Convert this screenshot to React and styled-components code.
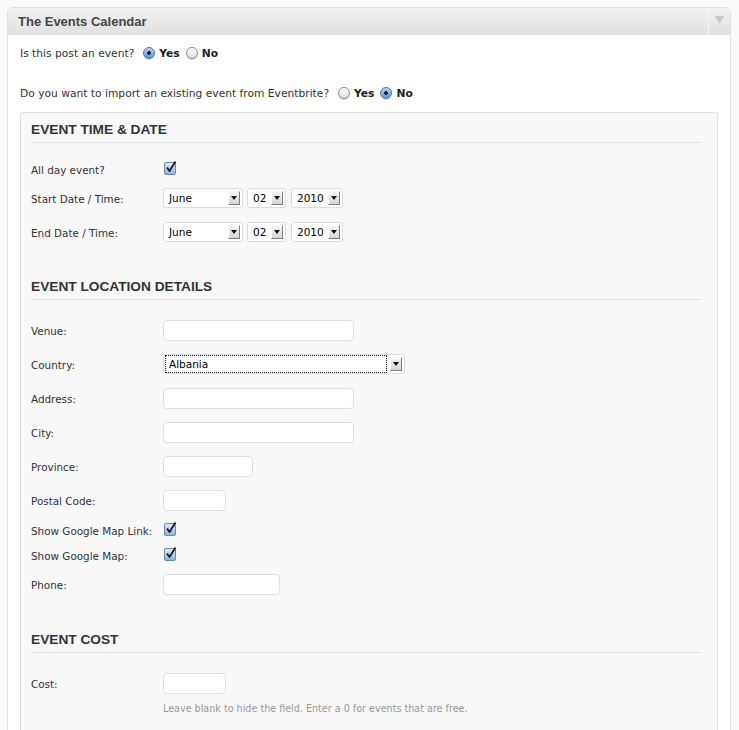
import styled, { createGlobalStyle } from 'styled-components';

const GlobalStyle = createGlobalStyle`
  html, body {
    margin: 0;
    padding: 0;
    background: #f9f9f9;
  }
  body {
    font-family: "DejaVu Sans", "Liberation Sans", sans-serif;
    color: #333;
  }
`;

const Page = styled.div`
  padding: 7px 9px 0 7px;
`;

const Postbox = styled.div`
  background: #fff;
  border: 1px solid #dfdfdf;
  border-radius: 6px 6px 0 0;
  width: 724px;
  box-sizing: border-box;
`;

const Header = styled.div`
  display: flex;
  align-items: stretch;
  height: 26px;
  background: linear-gradient(#f2f2f2, #e1e1e1);
  border-bottom: 1px solid #dfdfdf;
  border-radius: 6px 6px 0 0;
`;

const HeaderTitle = styled.h3`
  flex: 1;
  margin: 0;
  padding-left: 10px;
  display: flex;
  align-items: center;
  font-family: "Liberation Sans", Arial, sans-serif;
  font-size: 13px;
  font-weight: bold;
  color: #464646;
`;

const Toggle = styled.div`
  width: 22px;
  border-left: 1px solid #f7f7f7;
  display: flex;
  justify-content: center;
  padding-top: 8px;
  box-sizing: border-box;
`;

const Body = styled.div`
  padding: 0 12px 0 12px;
`;

const Question = styled.div`
  display: flex;
  align-items: center;
  height: 20px;
  margin-top: ${(p) => p.$top}px;
  font-size: 10.7px;
  color: #333;
`;

const QText = styled.span`
  margin-right: 9px;
`;

const Radio = styled.span`
  display: inline-block;
  width: 12px;
  height: 12px;
  border-radius: 50%;
  box-sizing: border-box;
  border: 1px solid ${(p) => (p.$on ? '#4d73a8' : '#8c8c8c')};
  background: ${(p) =>
    p.$on
      ? 'radial-gradient(circle, #1d2a3a 0 1.6px, transparent 2.2px), linear-gradient(#b9d3f2, #5d95dc)'
      : 'linear-gradient(#ffffff, #dcdcdc)'};
  box-shadow: 0 1px 1px rgba(0, 0, 0, 0.15);
  margin-right: 4px;
`;

const RadioLabel = styled.span`
  font-weight: bold;
  color: #222;
  margin-right: 6px;
`;

const Inner = styled.div`
  margin-top: 9px;
  background: #f8f8f8;
  border: 1px solid #dfdfdf;
  border-bottom: none;
  border-radius: 3px 3px 0 0;
  padding: 7px 16px 20px 10px;
`;

const Section = styled.div`
  margin-top: ${(p) => p.$top || 0}px;
`;

const SectionTitle = styled.h4`
  margin: 0 0 13px;
  height: 20px;
  line-height: 20px;
  padding-bottom: 2px;
  border-bottom: 1px solid #e0e0e0;
  font-family: "Liberation Sans", Arial, sans-serif;
  font-size: 13.7px;
  font-weight: bold;
  color: #333;
`;

const Row = styled.div`
  display: grid;
  grid-template-columns: 132px 1fr;
  align-items: center;
  height: ${(p) => (p.$short ? 25 : 34)}px;
`;

const Label = styled.label`
  padding-top: 2px;
  font-size: 10.4px;
  color: #333;
  white-space: nowrap;
`;

const Controls = styled.div`
  display: flex;
  align-items: center;
  gap: 4px;
`;

const TextBox = styled.div`
  width: ${(p) => p.$w}px;
  height: 21px;
  box-sizing: border-box;
  background: #fff;
  border: 1px solid #dfdfdf;
  border-radius: 4px;
`;

const SelectBox = styled.div`
  display: flex;
  align-items: center;
  justify-content: space-between;
  width: ${(p) => p.$w}px;
  height: 20px;
  box-sizing: border-box;
  background: #fff;
  border: 1px solid #dcdcdc;
  border-radius: 3px;
  padding: 0 2px 0 ${(p) => (p.$focus ? 2 : 5)}px;
  margin-right: ${(p) => p.$gap || 0}px;
  font-size: 11px;
  color: #000;
`;

const SelectValue = styled.span`
  flex: 1;
  display: flex;
  align-items: center;
  height: 16px;
  padding-left: ${(p) => (p.$focus ? 3 : 0)}px;
  outline: ${(p) => (p.$focus ? '1px dotted #222' : 'none')};
  outline-offset: 0;
  margin-right: ${(p) => (p.$focus ? 4 : 0)}px;
  font-family: "DejaVu Sans", sans-serif;
  font-size: 10.5px;
`;

const Arrow = styled.span`
  width: 12px;
  height: 14px;
  box-sizing: border-box;
  background: linear-gradient(#f4f4f4, #d6d6d6);
  border-top: 1px solid #fff;
  border-left: 1px solid #fff;
  border-right: 1px solid #7d7d7d;
  border-bottom: 1px solid #7d7d7d;
  display: flex;
  align-items: center;
  justify-content: center;
`;

const CheckWrap = styled.span`
  position: relative;
  display: inline-block;
  width: 12px;
  height: 13px;
  margin-left: 1px;
`;

const CheckBox = styled.span`
  display: block;
  width: 12px;
  height: 13px;
  box-sizing: border-box;
  border: 1px solid #6f87a6;
  border-radius: 2px;
  background: linear-gradient(#d9e7f8, #8fb3e2);
`;

const CheckMark = styled.svg`
  position: absolute;
  left: 1px;
  top: -2px;
`;

const Hint = styled.div`
  margin-left: 132px;
  font-size: 9.6px;
  color: #999;
  line-height: 18px;
`;

function Select({ value, w, gap, focus }) {
  return (
    <SelectBox $w={w} $gap={gap} $focus={focus}>
      <SelectValue $focus={focus}>{value}</SelectValue>
      <Arrow>
        <svg width="6" height="4" viewBox="0 0 6 4">
          <path d="M0 0 H6 L3 4 Z" fill="#111" />
        </svg>
      </Arrow>
    </SelectBox>
  );
}

function Check() {
  return (
    <CheckWrap>
      <CheckBox />
      <CheckMark width="12" height="14" viewBox="0 0 12 14">
        <path d="M2 7.5 L4.5 11 L10.5 1.5" fill="none" stroke="#1a1a1a" strokeWidth="1.8" strokeLinejoin="round" />
      </CheckMark>
    </CheckWrap>
  );
}

function DateRow({ label }) {
  return (
    <Row>
      <Label>{label}</Label>
      <Controls>
        <Select value="June" w={80} />
        <Select value="02" w={39} gap={1} />
        <Select value="2010" w={52} />
      </Controls>
    </Row>
  );
}

function InputRow({ label, w }) {
  return (
    <Row>
      <Label>{label}</Label>
      <Controls>
        <TextBox $w={w} />
      </Controls>
    </Row>
  );
}

function CheckRow({ label }) {
  return (
    <Row $short>
      <Label>{label}</Label>
      <Controls>
        <Check />
      </Controls>
    </Row>
  );
}

export default function App() {
  return (
    <>
      <GlobalStyle />
      <Page>
        <Postbox>
          <Header>
            <HeaderTitle>The Events Calendar</HeaderTitle>
            <Toggle>
              <svg width="9" height="8" viewBox="0 0 9 8">
                <path d="M0 0 H9 L4.5 8 Z" fill="#c8c8c8" />
              </svg>
            </Toggle>
          </Header>
          <Body>
            <Question $top={8}>
              <QText>Is this post an event?</QText>
              <Radio $on />
              <RadioLabel>Yes</RadioLabel>
              <Radio />
              <RadioLabel>No</RadioLabel>
            </Question>
            <Question $top={20}>
              <QText>Do you want to import an existing event from Eventbrite?</QText>
              <Radio />
              <RadioLabel>Yes</RadioLabel>
              <Radio $on />
              <RadioLabel>No</RadioLabel>
            </Question>

            <Inner>
              <Section>
                <SectionTitle>EVENT TIME &amp; DATE</SectionTitle>
                <CheckRow label="All day event?" />
                <DateRow label="Start Date / Time:" />
                <DateRow label="End Date / Time:" />
              </Section>

              <Section $top={28}>
                <SectionTitle>EVENT LOCATION DETAILS</SectionTitle>
                <InputRow label="Venue:" w={191} />
                <Row>
                  <Label>Country:</Label>
                  <Controls>
                    <Select value="Albania" w={242} focus />
                  </Controls>
                </Row>
                <InputRow label="Address:" w={191} />
                <InputRow label="City:" w={191} />
                <InputRow label="Province:" w={90} />
                <InputRow label="Postal Code:" w={63} />
                <CheckRow label="Show Google Map Link:" />
                <CheckRow label="Show Google Map:" />
                <InputRow label="Phone:" w={117} />
              </Section>

              <Section $top={29}>
                <SectionTitle>EVENT COST</SectionTitle>
                <InputRow label="Cost:" w={63} />
                <Hint>Leave blank to hide the field. Enter a 0 for events that are free.</Hint>
              </Section>
            </Inner>
          </Body>
        </Postbox>
      </Page>
    </>
  );
}
